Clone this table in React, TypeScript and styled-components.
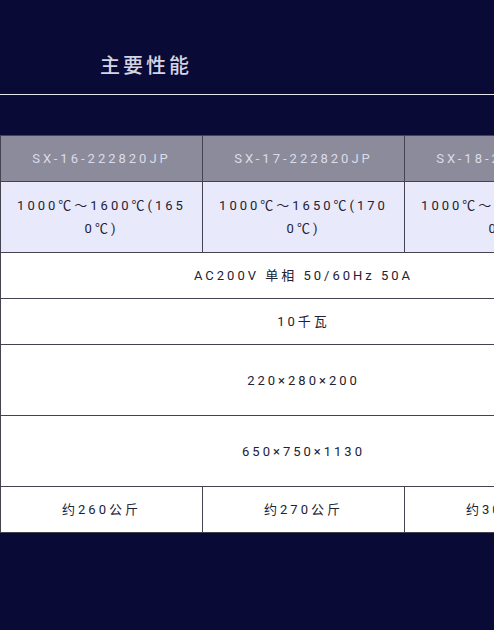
import * as React from "react";
import styled, { createGlobalStyle } from "styled-components";

const GlobalStyle = createGlobalStyle`
  html, body {
    margin: 0;
    padding: 0;
    background: #0a0a36;
  }
  body {
    font-family: "Roboto", "Noto Sans CJK SC", sans-serif;
  }
`;

const Page = styled.div`
  box-sizing: border-box;
  background: #0a0a36;
  min-height: 630px;
  padding-top: 51px;
`;

const Title = styled.h2`
  margin: 0;
  padding-left: 100px;
  font-size: 20px;
  line-height: 30px;
  font-weight: 500;
  letter-spacing: 3px;
  color: #d4d4e4;
`;

const Rule = styled.hr`
  margin: 13px 0 0;
  border: 0;
  height: 1px;
  background: #e6e6ee;
`;

const Scroller = styled.div`
  margin-top: 40px;
  overflow-x: auto;
  scrollbar-width: none;
  &::-webkit-scrollbar {
    display: none;
  }
`;

const Table = styled.table`
  width: 607px;
  table-layout: fixed;
  border-collapse: collapse;
  font-size: 13px;
  letter-spacing: 3px;
  line-height: 23px;
  text-align: center;
`;

const Row = styled.tr<{ $tone?: "head" | "tint" | "plain" }>`
  background: ${(p) =>
    p.$tone === "head" ? "#8b8b9b" : p.$tone === "tint" ? "#e8e9fb" : "#ffffff"};
  color: ${(p) => (p.$tone === "head" ? "#dcdce8" : "#222233")};
`;

const Cell = styled.td<{ $tall?: boolean; $pad?: number }>`
  border: 1px solid #444450;
  padding: ${(p) => p.$pad ?? 11}px 16px;
  height: ${(p) => (p.$tall ? "48px" : "22px")};
  vertical-align: middle;
  word-break: break-all;
`;

const models = ["SX-16-222820JP", "SX-17-222820JP", "SX-18-222820JP"];
const temps = [
  "1000℃～1600℃(1650℃)",
  "1000℃～1650℃(1700℃)",
  "1000℃～1700℃(1750℃)",
];
const weights = ["约260公斤", "约270公斤", "约300公斤"];

export default function App() {
  return (
    <Page>
      <GlobalStyle />
      <Title>主要性能</Title>
      <Rule />
      <Scroller>
        <Table>
          <colgroup>
            <col style={{ width: 202 }} />
            <col style={{ width: 202 }} />
            <col style={{ width: 202 }} />
          </colgroup>
          <tbody>
            <Row $tone="head">
              {models.map((m) => (
                <Cell key={m}>{m}</Cell>
              ))}
            </Row>
            <Row $tone="tint">
              {temps.map((t) => (
                <Cell key={t} $pad={12}>
                  {t}
                </Cell>
              ))}
            </Row>
            <Row>
              <Cell colSpan={3}>AC200V 单相 50/60Hz 50A</Cell>
            </Row>
            <Row>
              <Cell colSpan={3}>10千瓦</Cell>
            </Row>
            <Row>
              <Cell colSpan={3} $tall>
                220×280×200
              </Cell>
            </Row>
            <Row>
              <Cell colSpan={3} $tall>
                650×750×1130
              </Cell>
            </Row>
            <Row>
              {weights.map((w) => (
                <Cell key={w}>{w}</Cell>
              ))}
            </Row>
          </tbody>
        </Table>
      </Scroller>
    </Page>
  );
}
